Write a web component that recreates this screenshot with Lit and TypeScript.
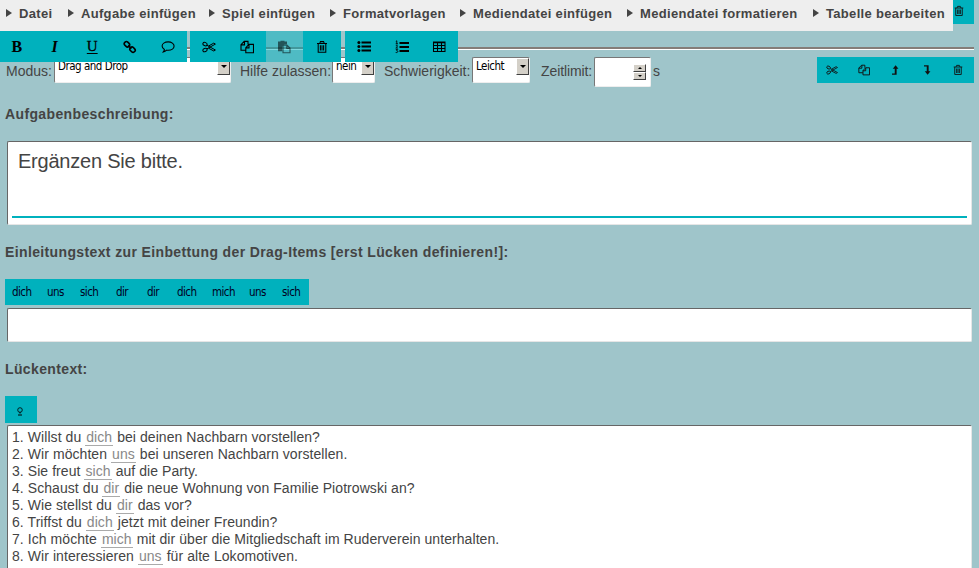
import { LitElement, html, css, svg, TemplateResult } from "lit";
import { customElement, property } from "lit/decorators.js";

const ICONS: Record<string, TemplateResult> = {
  link: svg`<g fill="none" stroke="currentColor" stroke-width="1.600"><rect x="-2.8" y="-2" width="5.6" height="4.2" rx="1.9" transform="translate(4 4.200) rotate(45)"/><rect x="-2.8" y="-2" width="5.6" height="4.2" rx="1.9" transform="translate(9.6 9.6) rotate(45)"/><path d="M5.2 5.4l3.200 3.200"/></g>`,
  comment: svg`<path d="M7.200 1.900c3.300 0 5.900 1.800 5.900 4.200s-2.600 4.200-5.900 4.200c-.6 0-1.100 0-1.600-.1-.9.900-2 1.500-3.300 1.700.6-.7 1-1.500 1.100-2.400C2 8.700 1.100 7.500 1.100 6.100c0-2.400 2.700-4.200 6.100-4.200z" fill="none" stroke="currentColor" stroke-width="1.100"/>`,
  cut: svg`<g fill="none" stroke="currentColor" stroke-width="1"><ellipse cx="3" cy="4.100" rx="2.200" ry="1.600" transform="rotate(25 3 4.100)"/><ellipse cx="3" cy="10" rx="2.200" ry="1.600" transform="rotate(-25 3 10)"/><path d="M4.800 5.200L13.400 10l-1.600 1L6.400 8.100M4.800 8.900L13.400 4.100l-1.600-1-5.400 3"/></g>`,
  copy: svg`<g fill="none" stroke="currentColor" stroke-width="1.100"><path d="M5.600 10.200H1V4.700L4.200 1.400H8v3M4.500 1.400v3.500H1M9 4.400h4.500v8.300H5.800V7.700zM9 4.400v3.500H5.800"/></g>`,
  paste: svg`<path d="M1 1.500h2.500V.8h4v.7H10v3H7.500L5.300 6.800v4.500H1z" fill="currentColor"/><path d="M6 5.100h4l3 3v4.700H6zM9.800 5.100v3.300H13" fill="none" stroke="currentColor" stroke-width="1.100"/>`,
  trash: svg`<path d="M2 3.500h10M4.800 3.400l.6-1.800h3.200l.6 1.800M3.200 3.600v8.600h7.600V3.600M5.400 5.300v5.200M7 5.300v5.200M8.600 5.300v5.200" fill="none" stroke="currentColor" stroke-width="1.050"/>`,
  list: svg`<g fill="currentColor"><circle cx="1.900" cy="2.600" r="1.500"/><circle cx="1.900" cy="6.600" r="1.500"/><circle cx="1.900" cy="10.600" r="1.500"/><path d="M4.500 1.600H14v2H4.500zM4.500 5.600H14v2H4.500zM4.500 9.600H14v2H4.500z"/></g>`,
  numbers: svg`<path d="M4.500 2H14v2H4.500zM4.500 6H14v2H4.500zM4.500 10H14v2H4.500z" fill="currentColor"/><path d="M.8 1.500l1-.7v3M.7 3.800h2.300M.8 5.700c1.600-.9 2.600.1 0 2.300h2.200M.8 9.600h1.900l-1 1.200c1.900 0 1.300 2.200-1 1.700" fill="none" stroke="currentColor" stroke-width=".9"/>`,
  table: svg`<path d="M1.500 2h11.500v9.500H1.500z M1.500 2.800h11.500M1.500 5.500h11.500M1.500 8.500h11.500M5.500 2v9.500M9.500 2v9.500" fill="none" stroke="currentColor" stroke-width="1.050"/>`,
  up: svg`<path d="M3.500 12.600V11.200h3.200V5.600H4.400L7.700 1.600 11 5.600H8.900v7z" fill="currentColor"/>`,
  down: svg`<path d="M3.500 1.400v1.400h3.200v5.600H4.400l3.300 4 3.300-4H8.900v-7z" fill="currentColor"/>`,
};

@customElement("ed-icon")
class EdIcon extends LitElement {
  @property() name = "";
  static styles = css`
    :host { display: block; width: 14px; height: 14px; }
    :host([small]) { width: 12px; height: 12px; }
    svg { display: block; width: 100%; height: 100%; }
  `;
  render() {
    return html`<svg viewBox="0 0 14 14">${ICONS[this.name]}</svg>`;
  }
}

@customElement("app-root")
class AppRoot extends LitElement {
  static styles = css`
    * { box-sizing: border-box; }
    :host {
      display: block; position: relative; height: 568px; overflow: hidden;
      background: #9fc5ca; color: #444;
      font: 14px/17px "Liberation Sans", Arial, sans-serif;
    }
    .header { position: absolute; top: 0; left: 0; z-index: 2; }
    .menu {
      display: grid; grid-template-columns: 62px 141px 121px 130px 167px 186px 146px;
      width: 953px; height: 31px; background: #eee; font-weight: bold; font-size: 13px;
    }
    .menu div { display: flex; align-items: center; padding: 0 0 5px 6px; white-space: nowrap; letter-spacing: .32px; }
    .menu i { width: 0; height: 0; border: 4px solid transparent; border-left: 6px solid #444; border-right: 0; margin-right: 7px; }
    .bars { display: flex; height: 31px; }
    .bar { display: flex; background: #00b1bd; color: #000; }
    .bar > * { width: 38px; display: flex; align-items: center; justify-content: center; }
    .b1 { width: 187px; margin-right: 3px; }
    .b1 > * { flex: 0 0 37.700px; padding-right: 4px; }
    .b2 { width: 151px; margin-right: 4px; background: none; }
    .b2 > * { background: #00b1bd; }
    .b2 > .off { background: rgba(0, 177, 189, .5); }
    .b2 > .off ed-icon { opacity: .55; }
    .b3 { width: 113px; }
    .letter { font: bold 16px "Liberation Serif", serif; }
    .it { font-style: italic; }
    .un { font-weight: normal; font-size: 15px; -webkit-text-stroke: .3px #000; text-decoration: underline; text-underline-offset: 2px; }
    .prev { display: flex; justify-content: flex-end; height: 24px; padding-right: 5px; }
    .tools { display: flex; width: 157px; height: 26px; background: #00b1bd; color: #111; }
    .tools > div { flex: 0 0 31.500px; display: flex; align-items: center; justify-content: center; padding-right: 1px; }
    .prev .tools { width: 21px; height: 24px; }
    .prev .tools > div { flex-basis: 11px; padding: 0 0 2px 0; }
    .rule { margin: 23px 5px 0 0; height: 3px; background: #857d78; border-bottom: 1px solid #fff; }
    .form { display: flex; align-items: flex-start; margin-top: 7px; height: 30px; padding: 0 5px 0 6px; }
    .lab { padding-top: 6px; white-space: nowrap; }
    .l1 { width: 48px; } .l2 { width: 92px; margin-left: 9px; } .l3 { width: 88px; margin-left: 9px; } .l4 { width: 53px; margin-left: 11px; }
    .l4 { letter-spacing: -.1px; }
    .sel, .num {
      display: flex; justify-content: space-between; background: #fff; height: 26px;
      border: 1px solid #eee; border-top-color: #777; border-left-color: #777; border-radius: 2px;
      color: #000; font: 11.500px/17px "DejaVu Sans Condensed", "Noto Sans", sans-serif; letter-spacing: -.5px; padding-left: 3px;
      white-space: nowrap;
    }
    .s1 { width: 177px; } .s2 { width: 43px; } .s3 { width: 58px; }
    .num { width: 57px; height: 30px; align-items: center; justify-content: flex-end; padding-right: 4px; }
    .drop, .spin {
      background: #d4d0c8; border: 1px solid #fff; border-right-color: #404040; border-bottom-color: #404040;
      width: 13px; height: 17px; display: flex; align-items: center; justify-content: center;
    }
    .drop::before { content: ""; border: 3px solid transparent; border-top-color: #000; border-bottom: 0; }
    .spin { height: 8px; }
    .spin::before { content: ""; border: 2px solid transparent; border-bottom-color: #000; border-top: 0; }
    .spin.dn::before { border-bottom: 0; border-top: 2px solid #000; }
    .s { margin-left: 2px; }
    .form .tools { margin-left: auto; }
    h2 { font: bold 14px/17px "Liberation Sans", Arial, sans-serif; letter-spacing: .37px; margin: 0; padding-left: 5px; }
    .h1 { margin-top: 19px; }
    .box {
      margin: 0 7px; background: #fff; border: 1px solid #e6e6e6; border-top-color: #666; border-left-color: #666;
      border-radius: 2px;
    }
    .desc { margin-top: 18px; height: 84px; padding: 8px 4px 0; }
    .desc div { height: 68px; border-bottom: 2px solid #00b1bd; padding-left: 6px; font-size: 20px; line-height: 23px; letter-spacing: -.22px; }
    .h2 { margin-top: 19px; }
    .chips {
      margin: 18px 0 0 5px; width: 304px; height: 26px; background: #00b1bd; color: #002;
      display: grid; grid-template-columns: 35px 33px 36px 31px 30px 35px 37px 33px 34px;
      font: 11.500px/27px "DejaVu Sans Condensed", "Noto Sans", sans-serif; letter-spacing: -.55px;
    }
    .chips span { padding-left: 7px; }
    .intro { margin-top: 3px; height: 34px; }
    .h3 { margin-top: 19px; }
    .gap { margin: 18px 0 0 5px; width: 32px; height: 27px; background: #00b1bd; display: flex; align-items: center; justify-content: center; padding: 4px 2px 0 0; }
    .gap svg { width: 6px; height: 9px; }
    .text { margin-top: 2px; height: 160px; padding: 3px 4px; white-space: nowrap; letter-spacing: .065px; }
    .text u { text-decoration: none; color: #888; border-bottom: 1px solid #aaa; padding: 0 1px; }
  `;

  menu = ["Datei", "Aufgabe einfügen", "Spiel einfügen", "Formatvorlagen", "Mediendatei einfügen", "Mediendatei formatieren", "Tabelle bearbeiten"];
  chips = ["dich", "uns", "sich", "dir", "dir", "dich", "mich", "uns", "sich"];
  lines = [
    ["Willst du", "dich", "bei deinen Nachbarn vorstellen?"],
    ["Wir möchten", "uns", "bei unseren Nachbarn vorstellen."],
    ["Sie freut", "sich", "auf die Party."],
    ["Schaust du", "dir", "die neue Wohnung von Familie Piotrowski an?"],
    ["Wie stellst du", "dir", "das vor?"],
    ["Triffst du", "dich", "jetzt mit deiner Freundin?"],
    ["Ich möchte", "mich", "mit dir über die Mitgliedschaft im Ruderverein unterhalten."],
    ["Wir interessieren", "uns", "für alte Lokomotiven."],
  ];

  icon(name: string) {
    return html`<div><ed-icon name=${name}></ed-icon></div>`;
  }
  smallIcon(name: string) {
    return html`<div><ed-icon small name=${name}></ed-icon></div>`;
  }

  render() {
    return html`
      <div class="header">
        <div class="menu">${this.menu.map((m) => html`<div><i></i>${m}</div>`)}</div>
        <div class="bars">
          <div class="bar b1">
            <div class="letter">B</div><div class="letter it">I</div><div class="letter un">U</div>
            ${this.icon("link")}${this.icon("comment")}
          </div>
          <div class="bar b2">
            ${this.icon("cut")}${this.icon("copy")}
            <div class="off"><ed-icon name="paste"></ed-icon></div>
            ${this.icon("trash")}
          </div>
          <div class="bar b3">${["list", "numbers", "table"].map((n) => this.icon(n))}</div>
        </div>
      </div>
      <div class="prev"><div class="tools">${this.smallIcon("trash")}</div></div>
      <div class="rule"></div>
      <div class="form">
        <span class="lab l1">Modus:</span><div class="sel s1">Drag and Drop<span class="drop"></span></div>
        <span class="lab l2">Hilfe zulassen:</span><div class="sel s2">nein<span class="drop"></span></div>
        <span class="lab l3">Schwierigkeit:</span><div class="sel s3">Leicht<span class="drop"></span></div>
        <span class="lab l4">Zeitlimit:</span>
        <div class="num"><div><div class="spin"></div><div class="spin dn"></div></div></div>
        <span class="lab s">s</span>
        <div class="tools">${["cut", "copy", "up", "down", "trash"].map((n) => this.smallIcon(n))}</div>
      </div>
      <h2 class="h1">Aufgabenbeschreibung:</h2>
      <div class="box desc"><div>Ergänzen Sie bitte.</div></div>
      <h2 class="h2">Einleitungstext zur Einbettung der Drag-Items [erst Lücken definieren!]:</h2>
      <div class="chips">${this.chips.map((c) => html`<span>${c}</span>`)}</div>
      <div class="box intro"></div>
      <h2 class="h3">Lückentext:</h2>
      <div class="gap"><svg viewBox="0 0 6 9"><circle cx="3" cy="3" r="2.300" fill="none" stroke="#000" stroke-width=".8"/><path d="M2.500 5h1v1.500h-1zM1 7.500h4v1H1z"/></svg></div>
      <div class="box text">
        ${this.lines.map(([a, g, b], i) => html`<div>${i + 1}. ${a} <u>${g}</u> ${b}</div>`)}
      </div>
    `;
  }
}
